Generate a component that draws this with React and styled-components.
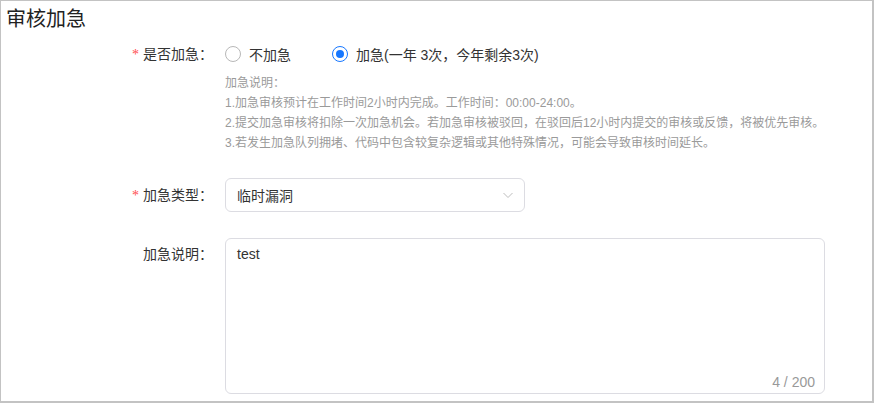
import React, { useState } from 'react'
import styled, { createGlobalStyle } from 'styled-components'

const GlobalStyle = createGlobalStyle`
  body {
    margin: 0;
    background: #fff;
    font-family: "Liberation Sans", "Noto Sans CJK SC", sans-serif;
  }
`

const Frame = styled.div`
  width: 874px;
  height: 403px;
  box-sizing: border-box;
  border-style: solid;
  border-color: #c3c3c3;
  border-width: 1px 2px 2px 1px;
  background: #fff;
  overflow: hidden;
`

const Title = styled.h2`
  margin: 0;
  padding: 4px 5px 0;
  font-size: 20px;
  font-weight: normal;
  line-height: 28px;
  color: #222;
`

const Form = styled.div`
  display: flex;
  flex-direction: column;
`

const Row = styled.div`
  display: flex;
  align-items: flex-start;
  margin-top: ${p => p.$top || 0}px;
`

const Label = styled.label`
  width: 212px;
  flex-shrink: 0;
  text-align: right;
  font-size: 14px;
  line-height: ${p => p.$lh || 22}px;
  color: #333;
`

const Star = styled.span`
  color: #ff4d4f;
  margin-right: 4px;
  font-family: "Liberation Serif", serif;
`

const Content = styled.div`
  margin-left: 12px;
  display: flex;
  flex-direction: column;
`

const RadioGroup = styled.div`
  display: flex;
  gap: 41px;
  height: 22px;
  align-items: center;
`

const RadioItem = styled.label`
  display: flex;
  align-items: center;
  gap: 8px;
  font-size: 14px;
  color: #333;
  cursor: pointer;
`

const Circle = styled.span`
  width: 16px;
  height: 16px;
  box-sizing: border-box;
  border-radius: 50%;
  border: 1px solid ${p => (p.$on ? '#1677ff' : '#b8b8b8')};
  display: flex;
  align-items: center;
  justify-content: center;
  &::after {
    content: '';
    width: 8px;
    height: 8px;
    border-radius: 50%;
    background: ${p => (p.$on ? '#1677ff' : 'transparent')};
  }
`

const Help = styled.div`
  margin-top: 8px;
  font-size: 12px;
  line-height: 20px;
  color: #9a9a9a;
`

const Select = styled.div`
  width: 300px;
  height: 34px;
  box-sizing: border-box;
  border: 1px solid #dcdce2;
  border-radius: 6px;
  display: flex;
  align-items: center;
  justify-content: space-between;
  padding: 0 10px 0 11px;
  font-size: 14px;
  color: #333;
`

const TextBox = styled.div`
  position: relative;
  width: 600px;
  height: 156px;
  box-sizing: border-box;
  border: 1px solid #dcdce2;
  border-radius: 6px;
`

const Area = styled.textarea`
  width: 100%;
  height: 100%;
  box-sizing: border-box;
  border: none;
  outline: none;
  resize: none;
  background: transparent;
  padding: 4px 11px;
  font-family: "Liberation Sans", "Noto Sans CJK SC", sans-serif;
  font-size: 14px;
  line-height: 22px;
  color: #333;
`

const Count = styled.span`
  position: absolute;
  right: 9px;
  bottom: 1px;
  font-size: 14px;
  line-height: 20px;
  color: #999;
`

const Chevron = () => (
  <svg width="12" height="12" viewBox="0 0 12 12" fill="none">
    <path d="M1.5 4l4.5 4.5L10.5 4" stroke="#bdbdbd" strokeWidth="1" />
  </svg>
)

export default function App() {
  const [urgent, setUrgent] = useState(true)
  const [text, setText] = useState('test')

  return (
    <Frame>
      <GlobalStyle />
      <Title>审核加急</Title>
      <Form>
        <Row $top={10}>
          <Label><Star>*</Star>是否加急：</Label>
          <Content>
            <RadioGroup>
              <RadioItem onClick={() => setUrgent(false)}>
                <Circle $on={!urgent} />不加急
              </RadioItem>
              <RadioItem onClick={() => setUrgent(true)}>
                <Circle $on={urgent} />加急(一年 3次，今年剩余3次)
              </RadioItem>
            </RadioGroup>
            <Help>
              <div>加急说明：</div>
              <div>1.加急审核预计在工作时间2小时内完成。工作时间：00:00-24:00。</div>
              <div>2.提交加急审核将扣除一次加急机会。若加急审核被驳回，在驳回后12小时内提交的审核或反馈，将被优先审核。</div>
              <div>3.若发生加急队列拥堵、代码中包含较复杂逻辑或其他特殊情况，可能会导致审核时间延长。</div>
            </Help>
          </Content>
        </Row>
        <Row $top={25}>
          <Label $lh={34}><Star>*</Star>加急类型：</Label>
          <Content>
            <Select>
              <span>临时漏洞</span>
              <Chevron />
            </Select>
          </Content>
        </Row>
        <Row $top={25}>
          <Label $lh={32}>加急说明：</Label>
          <Content>
            <TextBox>
              <Area value={text} maxLength={200} onChange={e => setText(e.target.value)} />
              <Count>{text.length} / 200</Count>
            </TextBox>
          </Content>
        </Row>
      </Form>
    </Frame>
  )
}
